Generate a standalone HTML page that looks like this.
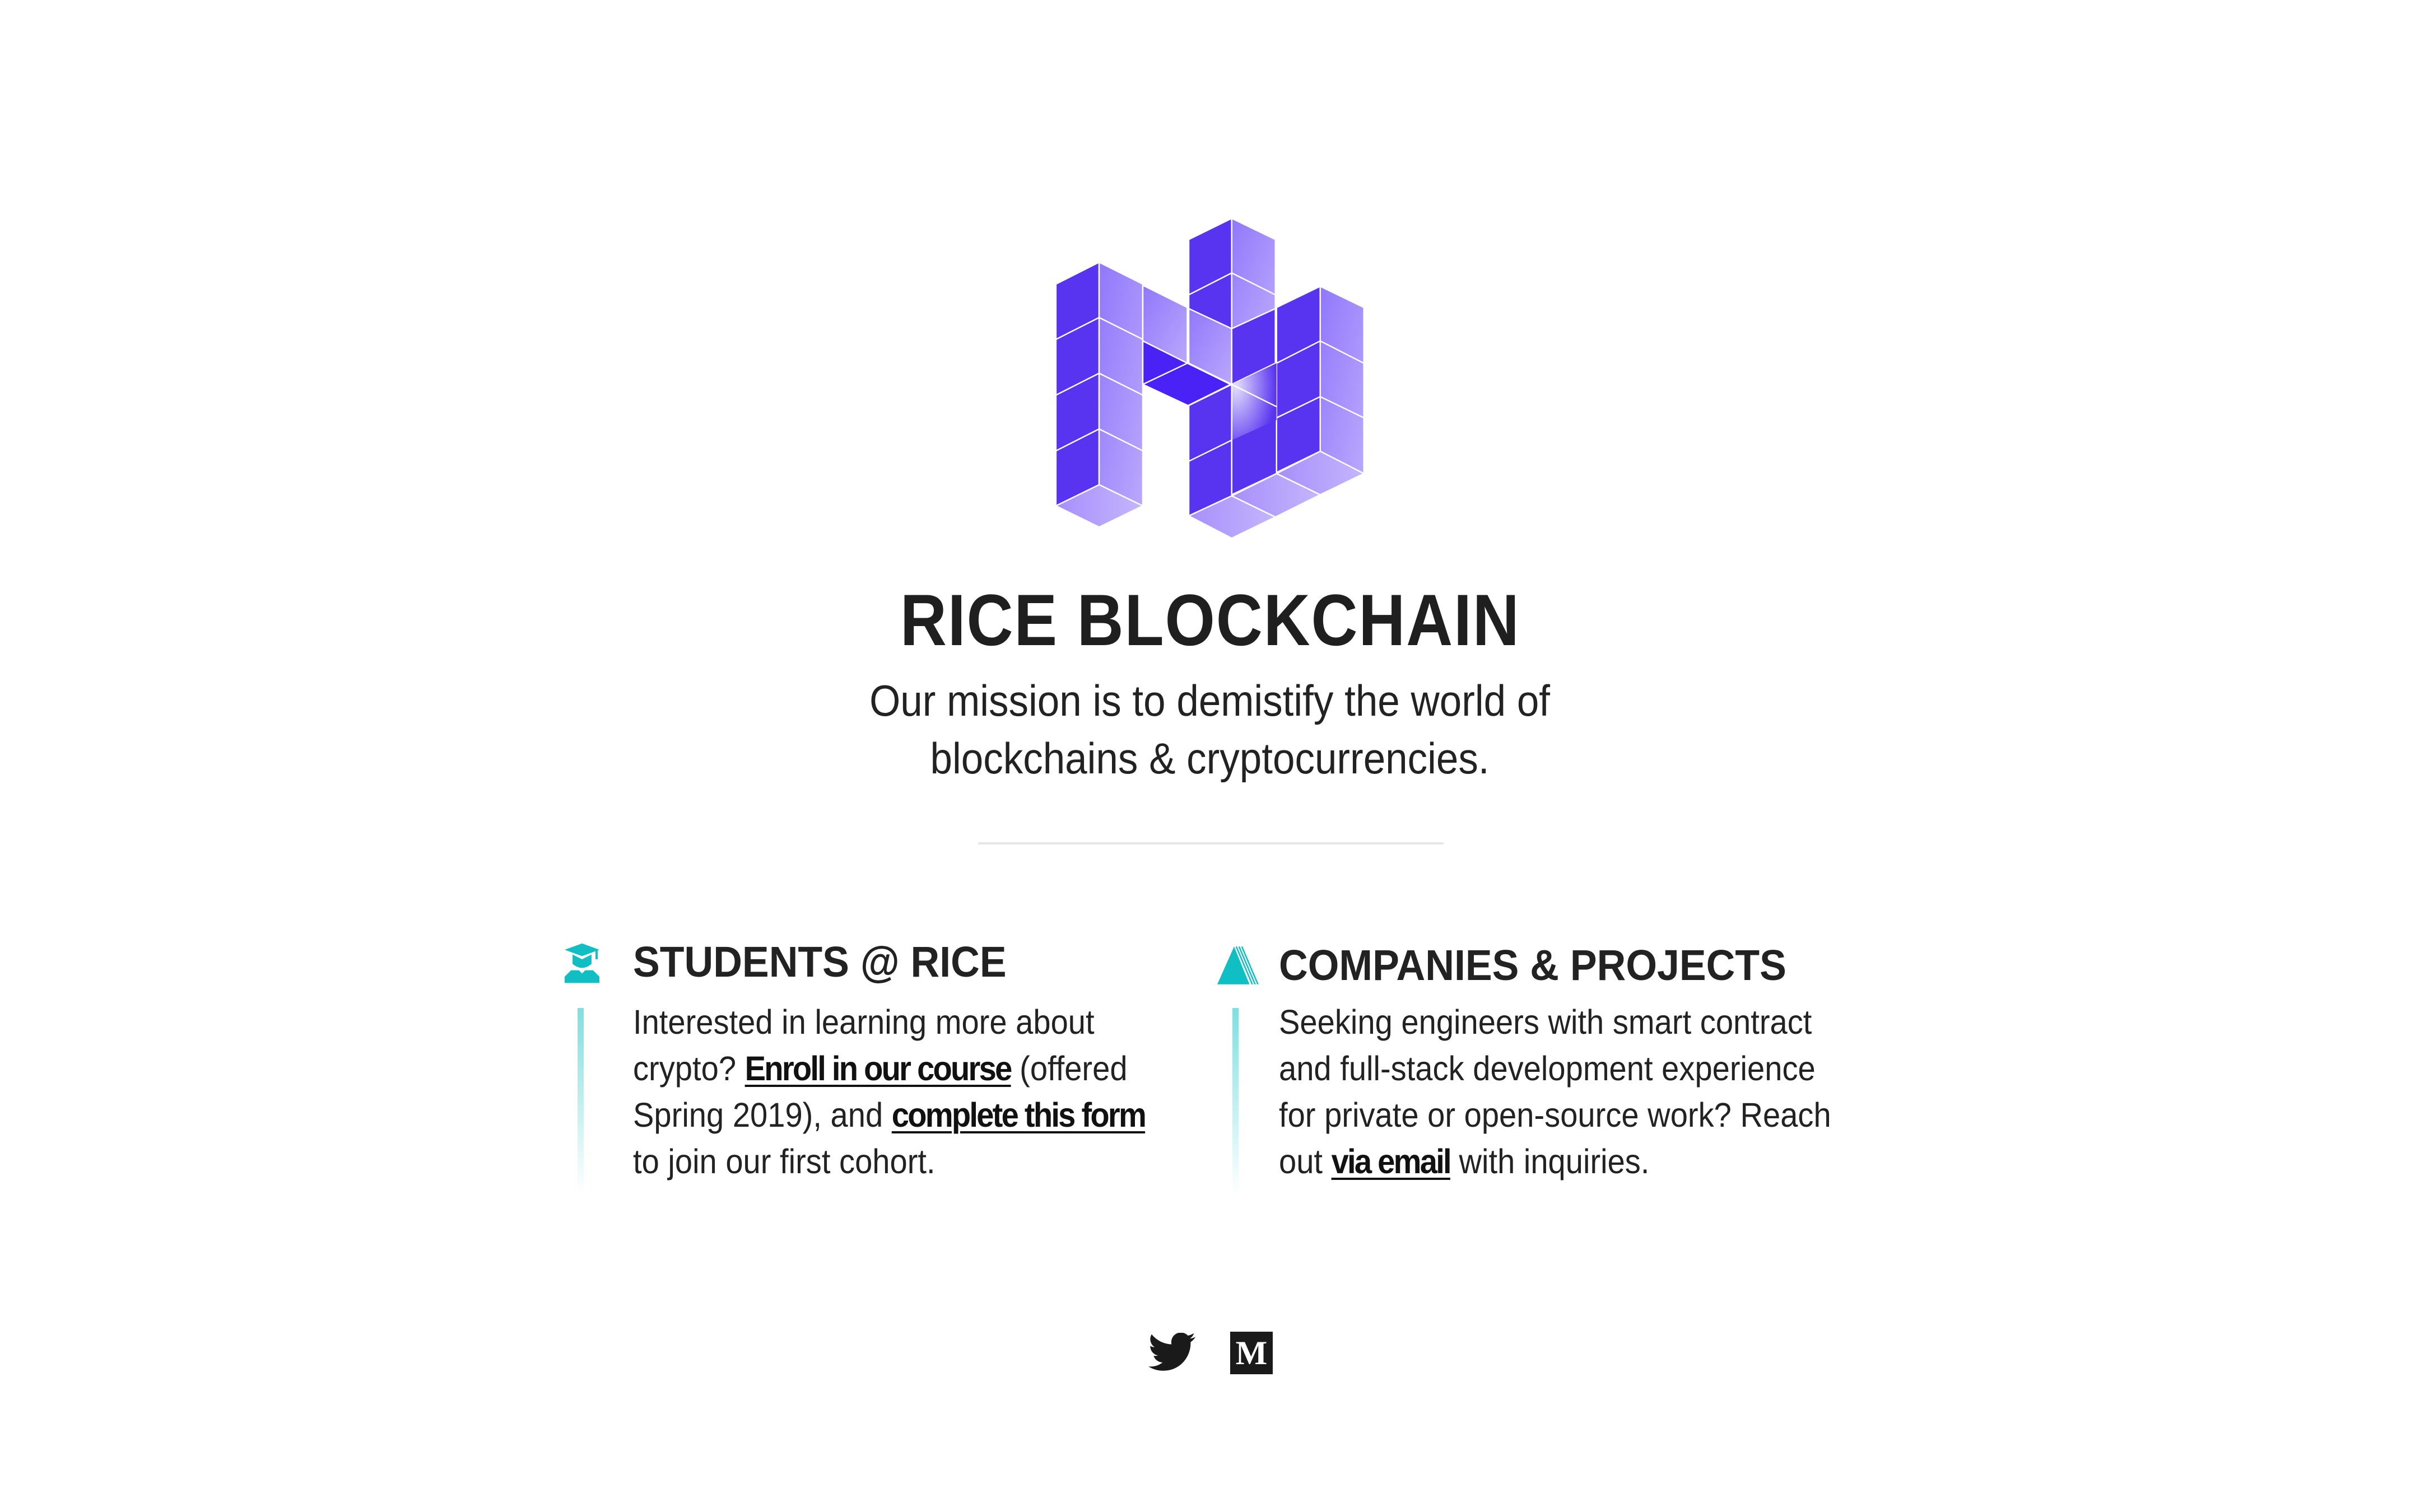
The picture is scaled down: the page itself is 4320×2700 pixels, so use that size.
<!DOCTYPE html>
<html><head><meta charset="utf-8">
<style>
html,body{margin:0;padding:0;background:#fff;}
body{width:4320px;height:2700px;position:relative;overflow:hidden;font-family:"Liberation Sans",sans-serif;color:#222;}
.abs{position:absolute;}
.title{left:0;width:4320px;top:1042px;text-align:center;font-size:130px;line-height:130px;font-weight:bold;color:#1f1f1f;}
.title span{display:inline-block;transform:scaleX(.885);letter-spacing:2px;}
.sub{left:0;width:4320px;top:1200px;text-align:center;font-size:78px;line-height:103px;color:#222;}
.sub span{display:inline-block;transform:scaleX(.91);}
.hr{left:1746px;width:831px;top:1504px;height:4px;background:#e6e6e6;}
.h{font-size:77px;line-height:77px;font-weight:bold;color:#222;white-space:nowrap;transform:scaleX(.93);transform-origin:left center;}
.body{font-size:61px;line-height:83px;color:#222;white-space:nowrap;transform:scaleX(.92);transform-origin:left top;}
.body a{color:#111;font-weight:bold;letter-spacing:-3px;text-decoration:underline;text-decoration-thickness:4px;text-underline-offset:8px;}
.bar{width:11px;height:332px;top:1800px;background:linear-gradient(#7fdfe0,rgba(127,223,224,0));}
</style></head><body>

<svg class="abs" style="left:1848px;top:368px;width:640px;height:605px" viewBox="0 0 1560 1520" preserveAspectRatio="none">
<defs>
<linearGradient id="lg" x1="0" y1="0" x2="1" y2="1"><stop offset="0" stop-color="#9177fb"/><stop offset="1" stop-color="#b9a8fd"/></linearGradient>
<linearGradient id="bg" x1="0" y1="0" x2="1" y2="0"><stop offset="0" stop-color="#a78ffb"/><stop offset="1" stop-color="#c4b6fd"/></linearGradient>
<radialGradient id="glow" cx="0.1" cy="0.3" r="0.9"><stop offset="0" stop-color="#e4defc"/><stop offset="1" stop-color="#5833f0"/></radialGradient>
</defs>
<g stroke="#fff" stroke-width="6" stroke-linejoin="round">
<polygon points="90,350 278,252 278,1250 90,1345" fill="#5833f0"/>
<polygon points="278,252 468,350 468,1345 278,1250" fill="url(#lg)"/>
<polygon points="90,1345 278,1250 468,1345 278,1440" fill="url(#bg)"/>
<polygon points="468,355 662,455 662,705 468,605" fill="url(#lg)"/>
<polygon points="468,605 662,705 850,800 665,895 468,800" fill="#4a22f5"/>
<polygon points="668,150 855,55 855,550 668,460" fill="#5833f0"/>
<polygon points="855,55 1045,150 1045,460 855,550" fill="url(#lg)"/>
<polygon points="668,460 855,550 855,800 668,705" fill="url(#lg)"/>
<polygon points="855,550 1045,460 1045,705 855,800" fill="#5833f0"/>
<polygon points="1050,455 1240,360 1240,1100 1050,1195" fill="#5833f0"/>
<polygon points="1240,360 1430,455 1430,1200 1240,1100" fill="url(#lg)"/>
<polygon points="668,895 855,800 855,1300 668,1390" fill="#5833f0"/>
<polygon points="855,800 1050,705 1050,1200 855,1295" fill="#5833f0"/>
<polygon points="855,800 1050,705 1050,960 855,1050" fill="url(#glow)" stroke="none"/>
<polygon points="668,1390 855,1300 1045,1395 855,1490" fill="url(#bg)"/>
<polygon points="855,1300 1050,1200 1240,1295 1045,1395" fill="url(#bg)"/>
<polygon points="1050,1200 1240,1100 1430,1200 1240,1295" fill="url(#bg)"/>
</g>
<g stroke="#fff" stroke-width="6" fill="none">
<path d="M90,598 278,500 468,598 M90,848 278,750 468,848 M90,1098 278,1000 468,1098"/>
<path d="M668,398 855,300 1045,398 M468,800 662,705"/>
<path d="M855,800 1050,900 M668,1145 855,1050 M1050,705 1240,605 1430,705 M1050,950 1240,855 1430,950"/>
<path d="M855,55 855,1300 M662,455 662,705"/>
</g>
</svg>

<div class="abs title"><span>RICE BLOCKCHAIN</span></div>
<div class="abs sub"><span>Our mission is to demistify the world of<br>blockchains &amp; cryptocurrencies.</span></div>
<div class="abs hr"></div>

<svg class="abs" style="left:1008px;top:1684px;width:62px;height:72px" viewBox="0 0 22 25">
<polygon points="11,0 22,4 11,8 0,4" fill="#10bfc4"/>
<rect x="19.5" y="4" width="1.4" height="6" fill="#10bfc4"/>
<path d="M5,7 L5,13 Q11,18 17,13 L17,7 L11,10 Z" fill="#10bfc4"/>
<path d="M4,17 L9,17 L11,19 L13,17 L18,17 L22,21 L22,25 L0,25 L0,21 Z" fill="#10bfc4"/>
</svg>
<div class="abs h" style="left:1130px;top:1680px">STUDENTS @ RICE</div>
<div class="abs bar" style="left:1031px"></div>
<div class="abs body" style="left:1130px;top:1784px">Interested in learning more about<br>crypto? <a>Enroll in our course</a> (offered<br>Spring 2019), and <a>complete this form</a><br>to join our first cohort.</div>

<svg class="abs" style="left:2173px;top:1690px;width:75px;height:68px" viewBox="0 0 30 27">
<polygon points="12,0 23,27 0,27" fill="#10bfc4"/>
<path d="M13.5,0 L25,27 M15.5,0 L27,27 M17.5,0 L29,27" stroke="#10bfc4" stroke-width="1"/>
</svg>
<div class="abs h" style="left:2283px;top:1686px">COMPANIES &amp; PROJECTS</div>
<div class="abs bar" style="left:2200px"></div>
<div class="abs body" style="left:2283px;top:1784px">Seeking engineers with smart contract<br>and full-stack development experience<br>for private or open-source work? Reach<br>out <a>via email</a> with inquiries.</div>

<svg class="abs" style="left:2050px;top:2380px;width:84px;height:76px" viewBox="0 0 24 21.5">
<path fill="#1a1a1a" d="M23.95 2.07a10 10 0 0 1-2.82.77 4.96 4.96 0 0 0 2.16-2.72c-.95.56-2 .96-3.12 1.19a4.92 4.92 0 0 0-8.38 4.48A13.94 13.94 0 0 1 1.64.66a4.92 4.920 0 0 0 1.52 6.57 4.9 4.9 0 0 1-2.23-.61v.06a4.92 4.92 0 0 0 3.95 4.83 4.9 4.9 0 0 1-2.22.08 4.93 4.93 0 0 0 4.6 3.42A9.87 9.87 0 0 1 0 17.04a13.94 13.94 0 0 0 7.55 2.21c9.05 0 14-7.5 14-13.98 0-.21 0-.42-.02-.63A9.94 9.94 0 0 0 24 2.09z"/>
</svg>
<div class="abs" style="left:2196px;top:2378px;width:76px;height:76px;background:#1a1a1a;color:#fff;font-family:'Liberation Serif',serif;font-weight:bold;font-size:60px;line-height:76px;text-align:center;">M</div>

</body></html>
